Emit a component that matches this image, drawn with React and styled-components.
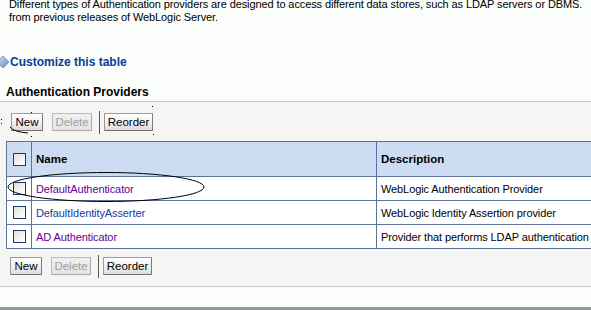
import React from "react";
import styled, { createGlobalStyle } from "styled-components";

const Global = createGlobalStyle`
  html, body { margin: 0; padding: 0; }
  body {
    background: #fbfdfa;
    font-family: Tahoma, "Liberation Sans", Arial, sans-serif;
    font-size: 11px;
    letter-spacing: -0.1px;
    color: #000;
    overflow: hidden;
    width: 591px;
    height: 310px;
  }
`;

const Page = styled.div`
  position: relative;
  width: 591px;
  height: 310px;
  overflow: hidden;
  display: flex;
  flex-direction: column;
  & > * { flex-shrink: 0; }
`;

const Intro = styled.p`
  margin: -2px 0 0 0;
  padding-left: 9px;
  line-height: 13px;
  white-space: nowrap;
  height: 26px;
`;

const Customize = styled.div`
  margin-top: 31px;
  display: flex;
  align-items: center;
  gap: 1px;
  height: 14px;
  font-size: 12px;
  font-weight: bold;
  letter-spacing: 0;
  color: #0b3c96;
`;

const SectionTitle = styled.h3`
  margin: 16px 0 0 6px;
  font-size: 12px;
  line-height: 14px;
  font-weight: bold;
  letter-spacing: 0;
  height: 14px;
`;

const Region = styled.div`
  margin-top: 2px;
  border-top: 1px solid #c9c9c9;
  border-bottom: 1px solid #c9c9c9;
  background-color: #f5f5f4;
  background-image: radial-gradient(#ececec 0.6px, transparent 0.7px);
  background-size: 2px 2px;
  height: 184px;
  position: relative;
`;

const Toolbar = styled.div`
  display: flex;
  align-items: center;
  height: 24px;
  padding-left: ${(p) => p.$left}px;
  margin-top: ${(p) => p.$top}px;
`;

const Button = styled.button`
  font-family: Tahoma, "Liberation Sans", Arial, sans-serif;
  font-size: 11.5px;
  letter-spacing: 0;
  height: 18px;
  width: ${(p) => p.$w}px;
  padding: 0;
  margin-right: ${(p) => p.$mr || 0}px;
  border: 1px solid ${(p) => (p.disabled ? "#b9b9b9" : "#9a9a9a")};
  border-bottom-color: ${(p) => (p.disabled ? "#a9a9a9" : "#6f6f6f")};
  border-right-color: ${(p) => (p.disabled ? "#a9a9a9" : "#7a7a7a")};
  color: ${(p) => (p.disabled ? "#a0a0a0" : "#000")};
  background: ${(p) =>
    p.disabled
      ? "linear-gradient(#f0f0f0, #e4e4e4)"
      : "linear-gradient(#ffffff, #f2f2f2 50%, #dcdcdc)"};
  border-radius: 1px;
  line-height: 16px;
`;

const Separator = styled.span`
  display: block;
  width: 1px;
  height: 23px;
  background: #5a5a5a;
  margin-right: 4px;
`;

const Table = styled.table`
  margin-top: ${(p) => p.$top}px;
  margin-left: 6px;
  width: 640px;
  border-collapse: collapse;
  table-layout: fixed;
`;

const Th = styled.th`
  height: 34px;
  text-align: left;
  font-size: 11.5px;
  font-weight: bold;
  letter-spacing: 0;
  padding: 0 0 0 ${(p) => p.$pl || 0}px;
  border: 1px solid #5b7397;
  background-color: #ccdcf2;
  background-image: radial-gradient(#c3d4ec 0.6px, transparent 0.7px);
  background-size: 2px 2px;
`;

const Td = styled.td`
  height: 23px;
  padding: 0 0 0 ${(p) => p.$pl || 0}px;
  border: 1px solid #5b7397;
  background: #fff;
  white-space: nowrap;
  font-size: 11px;
`;

const Link = styled.span`
  color: ${(p) => (p.$visited ? "#660099" : "#1a3a9c")};
`;

const Check = styled.span`
  display: block;
  width: 11px;
  height: 11px;
  border: 1px solid #1c3d6b;
  background: linear-gradient(135deg, #e0e0da, #ffffff);
  margin-left: 6px;
`;

const Footer = styled.div`
  height: 20px;
  border-bottom: 3px solid #8f969c;
  background: #fbfdfa;
`;

const Overlay = styled.svg`
  position: absolute;
  left: 0;
  top: 0;
  pointer-events: none;
`;

const CustomizeIcon = () => (
  <svg width="9" height="12" viewBox="0 0 9 12">
    <defs>
      <linearGradient id="cg" x1="0" y1="0" x2="1" y2="1">
        <stop offset="0" stopColor="#d5e4f8" />
        <stop offset="1" stopColor="#5c86c4" />
      </linearGradient>
    </defs>
    <path d="M-3 6 L2 0.8 Q3 0 4 0.8 L8.3 5.2 Q9 6 8.3 6.8 L4 11.2 Q3 12 2 11.2 Z" fill="url(#cg)" stroke="#6d8fbf" strokeWidth="0.8" />
  </svg>
);

const rows = [
  { name: "DefaultAuthenticator", visited: true, desc: "WebLogic Authentication Provider" },
  { name: "DefaultIdentityAsserter", visited: false, desc: "WebLogic Identity Assertion provider" },
  { name: "AD Authenticator", visited: true, desc: "Provider that performs LDAP authentication" },
];

const Buttons = ({ top, left }) => (
  <Toolbar $top={top} $left={left}>
    <Button $w={32} $mr={9}>New</Button>
    <Button $w={40} $mr={7} disabled>Delete</Button>
    <Separator />
    <Button $w={49}>Reorder</Button>
  </Toolbar>
);

export default function App() {
  return (
    <>
      <Global />
      <Page>
        <Intro>
          Different types of Authentication providers are designed to access different data stores, such as LDAP servers or DBMS.
          <br />
          from previous releases of WebLogic Server.
        </Intro>
        <Customize>
          <CustomizeIcon />
          Customize this table
        </Customize>
        <SectionTitle>Authentication Providers</SectionTitle>
        <Region>
          <Buttons top={8} left={11} />
          <Table $top={7}>
            <colgroup>
              <col style={{ width: 25 }} />
              <col style={{ width: 345 }} />
              <col />
            </colgroup>
            <thead>
              <tr>
                <Th><Check /></Th>
                <Th $pl={4}>Name</Th>
                <Th $pl={4}>Description</Th>
              </tr>
            </thead>
            <tbody>
              {rows.map((r) => (
                <tr key={r.name}>
                  <Td><Check /></Td>
                  <Td $pl={4}><Link $visited={r.visited}>{r.name}</Link></Td>
                  <Td $pl={4}>{r.desc}</Td>
                </tr>
              ))}
            </tbody>
          </Table>
          <Buttons top={5} left={10} />
        </Region>
        <Footer />
        <Overlay width="591" height="310" viewBox="0 0 591 310">
          <ellipse cx="106" cy="187" rx="98" ry="14.5" fill="none" stroke="#000" strokeWidth="1" />
          <path d="M10 127 Q14 132 28 133" fill="none" stroke="#000" strokeWidth="1" />
          <rect x="1" y="119" width="1" height="1" fill="#000" />
          <rect x="1" y="123" width="1" height="1" fill="#000" />
          <rect x="31" y="112" width="1" height="1" fill="#000" />
          <rect x="152" y="106" width="1" height="1" fill="#000" />
          <rect x="153" y="134" width="1" height="1" fill="#000" />
          <rect x="31" y="136" width="1" height="1" fill="#000" />
        </Overlay>
      </Page>
    </>
  );
}
